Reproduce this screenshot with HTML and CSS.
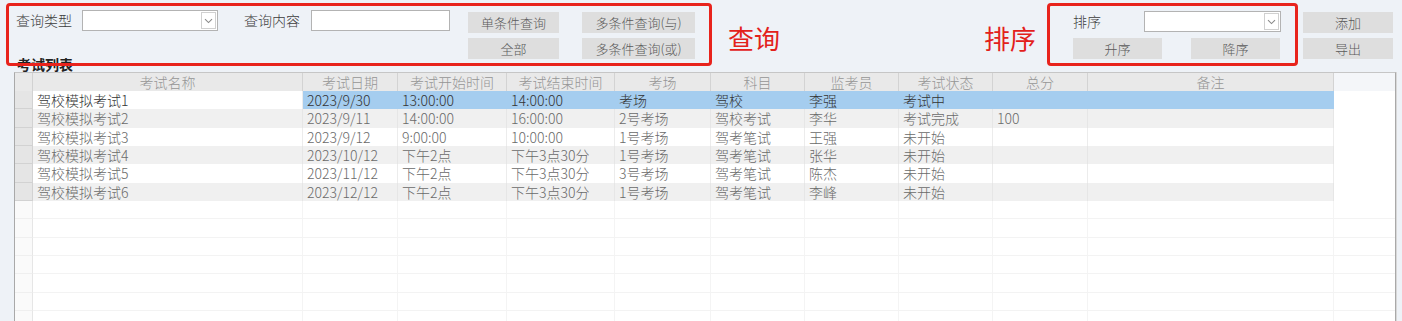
FILE: index.html
```html
<!DOCTYPE html>
<html lang="zh-CN">
<head>
<meta charset="utf-8">
<title>考试列表</title>
<link rel="stylesheet" href="styles.css">
</head>
<body>
<div class="toolbar">
  <div class="fields">
    <span class="label">查询类型</span>
    <div class="combo combo-type"><span class="arrow"><svg width="9" height="6" viewBox="0 0 9 6"><path d="M1 1.2 L4.5 4.6 L8 1.2" fill="none" stroke="#8a8a8a" stroke-width="1.1"/></svg></span></div>
    <span class="label label-content">查询内容</span>
    <div class="input"></div>
  </div>
  <div class="qbtns">
    <button class="btn">单条件查询</button>
    <button class="btn">多条件查询(与)</button>
    <button class="btn">全部</button>
    <button class="btn">多条件查询(或)</button>
  </div>
  <div class="note note-query">查询</div>
  <div class="note note-sort">排序</div>
  <div class="sort">
    <div class="sort-row">
      <span class="label sort-label">排序</span>
      <div class="combo combo-sort"><span class="arrow"><svg width="9" height="6" viewBox="0 0 9 6"><path d="M1 1.2 L4.5 4.6 L8 1.2" fill="none" stroke="#8a8a8a" stroke-width="1.1"/></svg></span></div>
    </div>
    <div class="sort-row sort-btns">
      <button class="btn btn-sort">升序</button>
      <button class="btn btn-sort">降序</button>
    </div>
  </div>
  <div class="side">
    <button class="btn btn-side">添加</button>
    <button class="btn btn-side">导出</button>
  </div>
</div>
<div class="title">考试列表</div>
<div class="grid">
  <div class="row head">
    <div class="rh"></div>
    <div class="c c1">考试名称</div>
    <div class="c c2">考试日期</div>
    <div class="c c3">考试开始时间</div>
    <div class="c c4">考试结束时间</div>
    <div class="c c5">考场</div>
    <div class="c c6">科目</div>
    <div class="c c7">监考员</div>
    <div class="c c8">考试状态</div>
    <div class="c c9">总分</div>
    <div class="c c10">备注</div>
    <div class="fill"></div>
  </div>
  <div class="row sel">
    <div class="rh"></div>
    <div class="c c1">驾校模拟考试1</div>
    <div class="c c2">2023/9/30</div>
    <div class="c c3">13:00:00</div>
    <div class="c c4">14:00:00</div>
    <div class="c c5">考场</div>
    <div class="c c6">驾校</div>
    <div class="c c7">李强</div>
    <div class="c c8">考试中</div>
    <div class="c c9"></div>
    <div class="c c10"></div>
    <div class="fill"></div>
  </div>
  <div class="row alt">
    <div class="rh"></div>
    <div class="c c1">驾校模拟考试2</div>
    <div class="c c2">2023/9/11</div>
    <div class="c c3">14:00:00</div>
    <div class="c c4">16:00:00</div>
    <div class="c c5">2号考场</div>
    <div class="c c6">驾校考试</div>
    <div class="c c7">李华</div>
    <div class="c c8">考试完成</div>
    <div class="c c9">100</div>
    <div class="c c10"></div>
    <div class="fill"></div>
  </div>
  <div class="row">
    <div class="rh"></div>
    <div class="c c1">驾校模拟考试3</div>
    <div class="c c2">2023/9/12</div>
    <div class="c c3">9:00:00</div>
    <div class="c c4">10:00:00</div>
    <div class="c c5">1号考场</div>
    <div class="c c6">驾考笔试</div>
    <div class="c c7">王强</div>
    <div class="c c8">未开始</div>
    <div class="c c9"></div>
    <div class="c c10"></div>
    <div class="fill"></div>
  </div>
  <div class="row alt">
    <div class="rh"></div>
    <div class="c c1">驾校模拟考试4</div>
    <div class="c c2">2023/10/12</div>
    <div class="c c3">下午2点</div>
    <div class="c c4">下午3点30分</div>
    <div class="c c5">1号考场</div>
    <div class="c c6">驾考笔试</div>
    <div class="c c7">张华</div>
    <div class="c c8">未开始</div>
    <div class="c c9"></div>
    <div class="c c10"></div>
    <div class="fill"></div>
  </div>
  <div class="row">
    <div class="rh"></div>
    <div class="c c1">驾校模拟考试5</div>
    <div class="c c2">2023/11/12</div>
    <div class="c c3">下午2点</div>
    <div class="c c4">下午3点30分</div>
    <div class="c c5">3号考场</div>
    <div class="c c6">驾考笔试</div>
    <div class="c c7">陈杰</div>
    <div class="c c8">未开始</div>
    <div class="c c9"></div>
    <div class="c c10"></div>
    <div class="fill"></div>
  </div>
  <div class="row alt">
    <div class="rh"></div>
    <div class="c c1">驾校模拟考试6</div>
    <div class="c c2">2023/12/12</div>
    <div class="c c3">下午2点</div>
    <div class="c c4">下午3点30分</div>
    <div class="c c5">1号考场</div>
    <div class="c c6">驾考笔试</div>
    <div class="c c7">李峰</div>
    <div class="c c8">未开始</div>
    <div class="c c9"></div>
    <div class="c c10"></div>
    <div class="fill"></div>
  </div>
  <div class="row empty"><div class="rh"></div><div class="c c1"></div><div class="c c2"></div><div class="c c3"></div><div class="c c4"></div><div class="c c5"></div><div class="c c6"></div><div class="c c7"></div><div class="c c8"></div><div class="c c9"></div><div class="c c10"></div><div class="fill"></div></div>
  <div class="row empty"><div class="rh"></div><div class="c c1"></div><div class="c c2"></div><div class="c c3"></div><div class="c c4"></div><div class="c c5"></div><div class="c c6"></div><div class="c c7"></div><div class="c c8"></div><div class="c c9"></div><div class="c c10"></div><div class="fill"></div></div>
  <div class="row empty"><div class="rh"></div><div class="c c1"></div><div class="c c2"></div><div class="c c3"></div><div class="c c4"></div><div class="c c5"></div><div class="c c6"></div><div class="c c7"></div><div class="c c8"></div><div class="c c9"></div><div class="c c10"></div><div class="fill"></div></div>
  <div class="row empty"><div class="rh"></div><div class="c c1"></div><div class="c c2"></div><div class="c c3"></div><div class="c c4"></div><div class="c c5"></div><div class="c c6"></div><div class="c c7"></div><div class="c c8"></div><div class="c c9"></div><div class="c c10"></div><div class="fill"></div></div>
  <div class="row empty"><div class="rh"></div><div class="c c1"></div><div class="c c2"></div><div class="c c3"></div><div class="c c4"></div><div class="c c5"></div><div class="c c6"></div><div class="c c7"></div><div class="c c8"></div><div class="c c9"></div><div class="c c10"></div><div class="fill"></div></div>
  <div class="row empty"><div class="rh"></div><div class="c c1"></div><div class="c c2"></div><div class="c c3"></div><div class="c c4"></div><div class="c c5"></div><div class="c c6"></div><div class="c c7"></div><div class="c c8"></div><div class="c c9"></div><div class="c c10"></div><div class="fill"></div></div>
  <div class="row empty"><div class="rh"></div><div class="c c1"></div><div class="c c2"></div><div class="c c3"></div><div class="c c4"></div><div class="c c5"></div><div class="c c6"></div><div class="c c7"></div><div class="c c8"></div><div class="c c9"></div><div class="c c10"></div><div class="fill"></div></div>
</div>
<div class="mark mark-query"></div>
<div class="mark mark-sort"></div>
</body>
</html>
```

FILE: styles.css
```css
* { box-sizing: border-box; }
html, body { margin: 0; padding: 0; }
body {
  width: 1402px;
  height: 321px;
  overflow: hidden;
  position: relative;
  background: #eef2f7;
  font-family: "Noto Sans CJK SC", sans-serif;
  color: #333;
}

/* ---------- toolbar ---------- */
.toolbar {
  display: flex;
  align-items: flex-start;
  height: 56px;
  padding: 10px 9px 0 16px;
}
.fields {
  display: flex;
  align-items: center;
  height: 21px;
}
.label {
  font-size: 14px;
  line-height: 21px;
  font-weight: 300;
  color: #3c3c3c;
  white-space: nowrap;
}
.label-content { margin-left: 26px; }
.combo {
  position: relative;
  height: 21px;
  background: #fff;
  border: 1px solid #b3b3b3;
}
.combo-type { width: 136px; margin-left: 10px; }
.combo .arrow {
  position: absolute;
  right: 1px;
  top: 1px;
  bottom: 1px;
  width: 15px;
  border: 1px solid #d0d0d0;
  background: #fff;
  display: flex;
  align-items: center;
  justify-content: center;
}
.input {
  width: 139px;
  height: 21px;
  margin-left: 11px;
  background: #fff;
  border: 1px solid #b3b3b3;
}

.btn {
  border: none;
  margin: 0;
  padding: 0;
  background: #dedede;
  color: #5a5a5a;
  font-family: "Noto Sans CJK SC", sans-serif;
  font-size: 13px;
  font-weight: 300;
  line-height: 21px;
  height: 21px;
  text-align: center;
  white-space: nowrap;
}
.qbtns {
  display: grid;
  grid-template-columns: 91px 113px;
  grid-auto-rows: 21px;
  column-gap: 23px;
  row-gap: 5px;
  margin-left: 18px;
  margin-top: 2px;
}

.note {
  font-size: 26px;
  line-height: 30px;
  color: #e3211b;
  margin-top: 13px;
  white-space: nowrap;
}
.note-query { margin-left: 33px; }
.note-sort { margin-left: auto; }

.sort {
  display: flex;
  flex-direction: column;
  gap: 6px;
  width: 208px;
  margin-left: 37px;
}
.sort-row {
  display: flex;
  align-items: center;
}
.sort-label { width: 71px; }
.combo-sort { width: 137px; height: 21px; margin-top: 1px; }
.sort-btns { gap: 29px; }
.btn-sort { width: 89px; }

.side {
  display: flex;
  flex-direction: column;
  gap: 5px;
  margin-left: 22px;
  margin-top: 2px;
}
.btn-side { width: 90px; }

/* ---------- title ---------- */
.title {
  height: 16px;
  padding-left: 17px;
  font-size: 14px;
  line-height: 16px;
  font-weight: bold;
  color: #222;
}

/* ---------- grid ---------- */
.grid {
  margin-left: 14px;
  width: 1382px;
  height: 249px;
  background: #fff;
  border-left: 1px solid #a9a9a9;
  border-top: 1px solid #c6c6c6;
  border-right: 1px solid #a9a9a9;
  box-shadow: 1px 0 0 #d8d8d8;
  overflow: hidden;
}
.row {
  display: flex;
  height: 18.33px;
  font-size: 14px;
  line-height: 18px;
  font-weight: 300;
  color: #6a6a6a;
}
.rh {
  width: 18px;
  flex: none;
  background: #e5e5e5;
  border-right: 1px solid #d2d2d2;
  border-bottom: 1px solid #d2d2d2;
}
.c {
  flex: none;
  padding-left: 4px;
  white-space: nowrap;
  overflow: hidden;
  border-right: 1px solid #ececec;
}
.fill { flex: 1; background: #fff; }

.c1 { width: 270px; }
.c2 { width: 95px; }
.c3 { width: 109px; }
.c4 { width: 108px; }
.c5 { width: 96px; }
.c6 { width: 94px; }
.c7 { width: 94px; }
.c8 { width: 94px; }
.c9 { width: 95px; }
.c10 { width: 246px; }

.head { height: 18px; }
.head .rh { background: #e9e9e9; border-bottom: none; }
.head .c {
  background: #e9e9e9;
  color: #959595;
  text-align: center;
  padding-left: 0;
  border-right: 1px solid #d3d3d3;
}
.head .fill { background: #f4f6f9; }

.sel { color: #333; }
.sel .c { background: #a5cdef; border-right-color: #a5cdef; }
.sel .c1 { background: #fff; border-right-color: #ececec; }

.alt .c { background: #f0f0f0; border-right-color: #e6e6e6; }

.empty .rh { background: #fafafa; border-bottom-color: #efefef; border-right-color: #e6e6e6; }
.empty .c { border-bottom: 1px solid #f3f3f3; border-right-color: #f4f4f4; }
.empty .fill { border-bottom: 1px solid #f3f3f3; }

/* ---------- annotation frames ---------- */
.mark {
  position: absolute;
  top: 3px;
  height: 63px;
  border: 3px solid #e8231c;
  border-radius: 4px;
  pointer-events: none;
}
.mark-query { left: 6px; width: 706px; }
.mark-sort { left: 1047px; width: 251px; }
```
